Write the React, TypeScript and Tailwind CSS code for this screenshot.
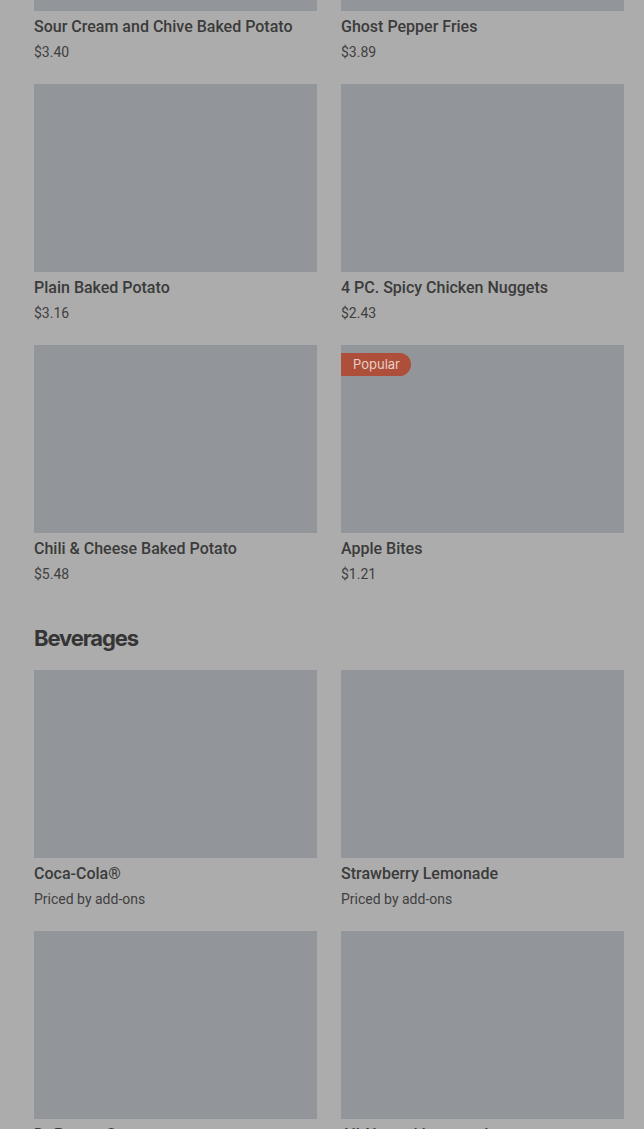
const sides = [
  { name: 'Sour Cream and Chive Baked Potato', price: '$3.40' },
  { name: 'Ghost Pepper Fries', price: '$3.89' },
  { name: 'Plain Baked Potato', price: '$3.16' },
  { name: '4 PC. Spicy Chicken Nuggets', price: '$2.43' },
  { name: 'Chili & Cheese Baked Potato', price: '$5.48' },
  { name: 'Apple Bites', price: '$1.21', popular: true },
]

const beverages = [
  { name: 'Coca-Cola®', price: 'Priced by add-ons' },
  { name: 'Strawberry Lemonade', price: 'Priced by add-ons' },
  { name: 'Dr Pepper®', price: 'Priced by add-ons' },
  { name: 'All-Natural Lemonade', price: 'Priced by add-ons' },
]

type Item = { name: string; price: string; popular?: boolean }

function ItemCard({ item }: { item: Item }) {
  return (
    <div className="flex flex-col">
      <div className="relative h-[188px] bg-[#929599]">
        {item.popular && (
          <span className="absolute left-0 top-[8px] flex h-[23px] items-center rounded-r-full bg-[#ad4f3a] pl-[12px] pr-[11px] font-['Inter',sans-serif] text-[13px] text-[#e9cfc8]">
            Popular
          </span>
        )}
      </div>
      <p className="mt-[5px] text-[16px] leading-[22px] font-medium text-[#3b3b3b]">{item.name}</p>
      <p className="mt-[4px] text-[14px] leading-[20px] text-[#404040]">{item.price}</p>
    </div>
  )
}

export default function App() {
  return (
    <div className="h-[1129px] overflow-hidden bg-[#acacac] font-['Roboto',sans-serif]">
      <div className="-mt-[177px] pl-[34px] pr-[20px]">
        <div className="grid grid-cols-2 gap-x-[24px] gap-y-[22px]">
          {sides.map((item) => (
            <ItemCard key={item.name} item={item} />
          ))}
        </div>
        <h2 className="mt-[40px] mb-[18px] font-['Inter',sans-serif] text-[22px] leading-[28px] font-bold tracking-[-0.05em] text-[#353535]">
          Beverages
        </h2>
        <div className="grid grid-cols-2 gap-x-[24px] gap-y-[22px]">
          {beverages.map((item) => (
            <ItemCard key={item.name} item={item} />
          ))}
        </div>
      </div>
    </div>
  )
}
